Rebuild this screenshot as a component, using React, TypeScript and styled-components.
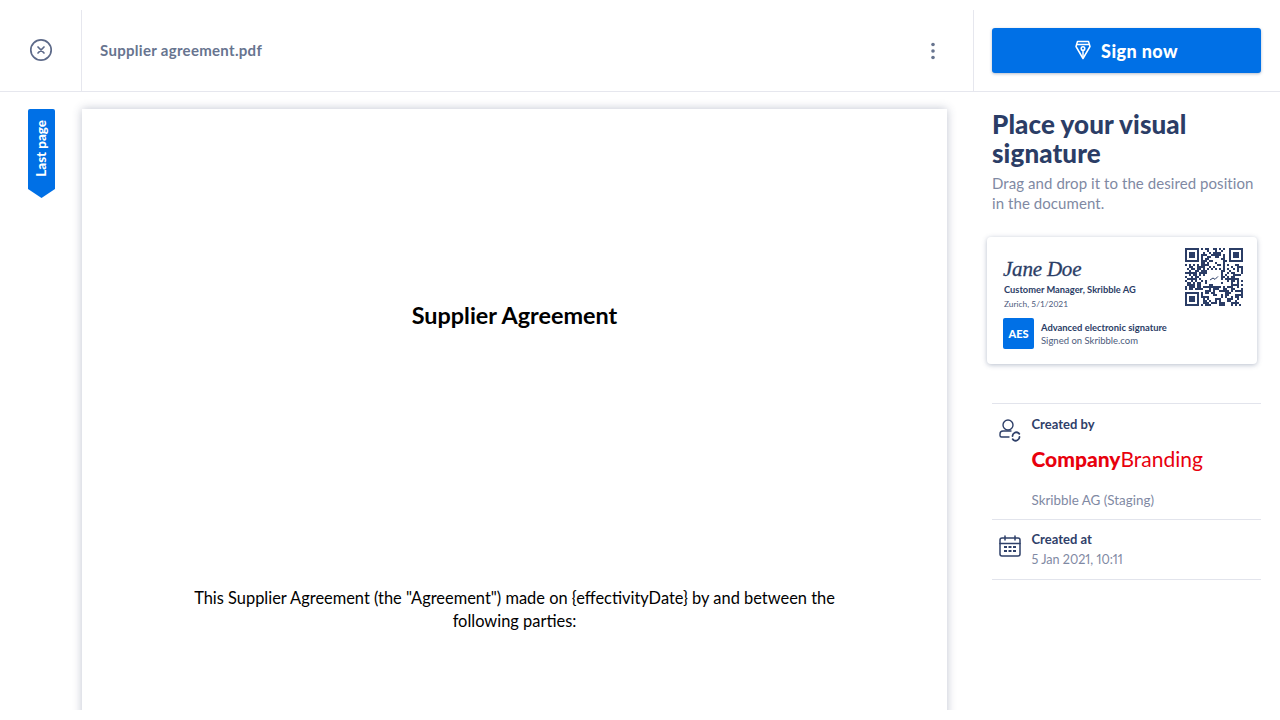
import React from "react";
import styled, { createGlobalStyle } from "styled-components";

const Global = createGlobalStyle`
  html, body { margin: 0; padding: 0; background: #fff; }
  body { width: 1280px; height: 720px; overflow: hidden; font-family: Lato, "Open Sans", sans-serif; }
`;
const Page = styled.div`width:1280px;height:720px;overflow:hidden;display:flex;flex-direction:column;background:#fff;`;
const Header = styled.header`height:91px;flex:none;display:flex;border-bottom:1px solid #e6e7ee;`;
const CloseCell = styled.div`width:81px;flex:none;margin-top:10px;border-right:1px solid #e6e7ee;display:flex;align-items:center;justify-content:center;padding-bottom:2px;`;
const TitleCell = styled.div`width:892px;flex:none;margin-top:10px;border-right:1px solid #e6e7ee;display:flex;align-items:center;justify-content:space-between;padding:0 32px 0 18px;box-sizing:border-box;`;
const FileName = styled.div`font-size:15px;font-weight:700;color:#67748f;letter-spacing:.3px;margin-bottom:2px;`;
const ButtonCell = styled.div`flex:1;padding:28px 19px 0 18px;`;
const SignButton = styled.button`width:269px;height:45px;border:0;border-radius:3px;background:#0070e6;box-shadow:0 1px 3px rgba(40,60,100,.35);color:#fff;font:900 18px Lato,sans-serif;letter-spacing:.4px;display:flex;align-items:center;justify-content:center;gap:10px;padding:0;`;
const NibIcon = styled.svg`margin-top:-2px;`;
const Body = styled.main`height:618px;flex:none;overflow:hidden;display:grid;grid-template-columns:82px 865px 1fr;`;
const Rail = styled.div`padding:17px 0 0 28px;`;
const Bookmark = styled.div`width:27px;height:89px;background:#0070e6;border-radius:2px 2px 0 0;clip-path:polygon(0 0,100% 0,100% 80px,50% 100%,0 80px);display:flex;justify-content:center;align-items:flex-start;padding-top:11px;box-sizing:border-box;`;
const BookmarkText = styled.span`writing-mode:vertical-rl;transform:rotate(180deg);color:#fff;font-size:13.4px;font-weight:900;line-height:27px;`;
const Sheet = styled.section`margin-top:17px;background:#fff;box-shadow:0 0 9px rgba(60,70,110,.32);display:flex;flex-direction:column;align-items:center;height:700px;`;
const DocTitle = styled.h1`margin:191px 0 0;font:700 23.4px/30px Lato,sans-serif;color:#000;`;
const DocText = styled.p`margin:256px 0 0;width:690px;text-align:center;font:400 16.42px/23px Lato,sans-serif;color:#000;`;
const Side = styled.aside`padding:18px 19px 0 45px;display:flex;flex-direction:column;`;
const Heading = styled.h2`margin:0;font:900 26px/29px Lato,sans-serif;letter-spacing:.1px;color:#2b3d66;`;
const Hint = styled.p`margin:6px 0 0;font:400 15px/19.5px Lato,sans-serif;color:#7f89a3;letter-spacing:.07px;`;
const SigCard = styled.div`margin:24px 0 0 -5px;width:270px;height:127px;box-sizing:border-box;border-radius:4px;background:#fff;box-shadow:0 1px 5px rgba(50,70,110,.35);padding:11px 14px 0 16px;position:relative;display:flex;flex-direction:column;`;
const SigName = styled.div`margin-top:9px;font:italic 400 21px/24px "Liberation Serif",serif;color:#2b3d66;letter-spacing:-.2px;-webkit-text-stroke:.3px #2b3d66;`;
const SigRole = styled.div`margin:3px 0 0 1px;font:700 9.3px/12px Lato,sans-serif;color:#2b3d66;`;
const SigPlace = styled.div`margin:2px 0 0 1px;font:400 8.4px/12px Lato,sans-serif;color:#4d5b7c;`;
const AesRow = styled.div`margin-top:8px;display:flex;gap:7px;align-items:center;`;
const AesBadge = styled.div`width:31px;height:31px;border-radius:2px;background:#0070e6;color:#fff;font:900 11px/31px Lato,sans-serif;text-align:center;`;
const AesTitle = styled.div`font:700 9.4px/13px Lato,sans-serif;color:#2b3d66;`;
const AesSub = styled.div`font:400 9.5px/13px Lato,sans-serif;color:#4d5b7c;`;
const Qr = styled.svg`position:absolute;left:198px;top:11px;`;
const InfoList = styled.div`margin-top:39px;border-top:1px solid #e2e4ec;`;
const InfoRow = styled.div<{ $h: number; $pt: number }>`height:${p => p.$h}px;box-sizing:border-box;border-bottom:1px solid #e2e4ec;display:grid;grid-template-columns:33.5px 1fr;padding:${p => p.$pt}px 0 0 6px;`;
const InfoIcon = styled.svg<{ $mt: number }>`margin-top:${p => p.$mt}px;`;
const InfoLabel = styled.div`font:700 13px/16px Lato,sans-serif;color:#2f4069;`;
const InfoValue = styled.div<{ $mt: number; $size: number }>`margin-top:${p => p.$mt}px;font:400 ${p => p.$size}px/16px Lato,sans-serif;font-variant-numeric:proportional-nums;color:#7f89a3;`;
const Brand = styled.div`margin-top:14px;font:400 21px/26px Lato,sans-serif;color:#e8000d;`;
const BrandStrong = styled.strong`font-weight:900;`;

function qrPath(): string {
  const n = 29;
  const inFinder = (x: number, y: number, a: number, b: number) => x >= a && x < a + 8 && y >= b && y < b + 8;
  let s = 12345, d = "";
  const box = (x: number, y: number, w: number, h: number) => { d += `M${x} ${y}h${w}v${h}h${-w}z`; };
  for (let y = 0; y < n; y++) for (let x = 0; x < n; x++) {
    s = (s * 1103515245 + 12345) & 0x7fffffff;
    const f = inFinder(x, y, 0, 0) || inFinder(x, y, n - 8, 0) || inFinder(x, y, 0, n - 8);
    const c = x >= 11 && x < 18 && y >= 11 && y < 18;
    if (!f && !c && ((s >> 16) & 1)) box(x, y, 1, 1);
  }
  for (const [a, b] of [[0, 0], [n - 7, 0], [0, n - 7]]) {
    d += `M${a} ${b}h7v7h-7zM${a + 1} ${b + 1}v5h5v-5z`;
    box(a + 2, b + 2, 3, 3);
  }
  return d;
}

const docText = 'This Supplier Agreement (the "Agreement") made on {effectivityDate} by and between the following parties:';

export default function App() {
  return (
    <Page>
      <Global />
      <Header>
        <CloseCell>
          <svg width="24" height="24" viewBox="0 0 24 24" fill="none" stroke="#5d6a89" strokeWidth="1.7" strokeLinecap="round">
            <circle cx="12" cy="12" r="10.2" /><path d="M9 9l6 6M15 9l-6 6" />
          </svg>
        </CloseCell>
        <TitleCell>
          <FileName>Supplier agreement.pdf</FileName>
          <svg width="16" height="20" viewBox="0 0 16 20" fill="#67748f">
            <circle cx="8" cy="3.5" r="1.8" /><circle cx="8" cy="10" r="1.8" /><circle cx="8" cy="16.5" r="1.8" />
          </svg>
        </TitleCell>
        <ButtonCell>
          <SignButton>
            <NibIcon width="16" height="20" viewBox="0 0 16 20" fill="none" stroke="#fff" strokeWidth="1.5" strokeLinejoin="round">
              <path d="M2.5 1.5h11l1.5 5-7 12-7-12z" /><path d="M2 4.5h12" /><circle cx="8" cy="8.5" r="1.8" /><path d="M8 10.3V17" />
            </NibIcon>
            Sign now
          </SignButton>
        </ButtonCell>
      </Header>
      <Body>
        <Rail><Bookmark><BookmarkText>Last page</BookmarkText></Bookmark></Rail>
        <Sheet>
          <DocTitle>Supplier Agreement</DocTitle>
          <DocText>{docText}</DocText>
        </Sheet>
        <Side>
          <Heading>Place your visual signature</Heading>
          <Hint>Drag and drop it to the desired position in the document.</Hint>
          <SigCard>
            <SigName>Jane Doe</SigName>
            <SigRole>Customer Manager, Skribble AG</SigRole>
            <SigPlace>Zurich, 5/1/2021</SigPlace>
            <AesRow>
              <AesBadge>AES</AesBadge>
              <div><AesTitle>Advanced electronic signature</AesTitle><AesSub>Signed on Skribble.com</AesSub></div>
            </AesRow>
            <Qr width="58" height="58" viewBox="0 0 29 29" fill="#2b3d66" fillRule="evenodd"><path d={qrPath()} /><path d="M12.5 16l1.5-1 1 .7 1.5-1.5" fill="none" stroke="#2b3d66" strokeWidth=".5" /></Qr>
          </SigCard>
          <InfoList>
            <InfoRow $h={116} $pt={12}>
              <InfoIcon $mt={2} width="24" height="24" viewBox="0 0 24 24" fill="none" stroke="#2f4069" strokeWidth="1.4" strokeLinecap="round">
                <circle cx="10" cy="7" r="5" /><path d="M13 13H5a3 3 0 0 0-3 3v1.5a1.5 1.5 0 0 0 1.5 1.5H11" /><path d="M14.5 18a3.8 3.8 0 0 1 6-3l.8.8M21.5 19a3.8 3.8 0 0 1-6 3l-.8-.8" strokeWidth="1.8" />
              </InfoIcon>
              <div>
                <InfoLabel>Created by</InfoLabel>
                <Brand><BrandStrong>Company</BrandStrong>Branding</Brand>
                <InfoValue $mt={20} $size={13.4}>Skribble AG (Staging)</InfoValue>
              </div>
            </InfoRow>
            <InfoRow $h={60} $pt={11}>
              <InfoIcon $mt={3} width="24" height="24" viewBox="0 0 24 24" fill="none" stroke="#2f4069" strokeWidth="1.5" strokeLinecap="round">
                <rect x="2" y="4" width="20" height="18" rx="2" /><path d="M2 9.5h20M7 2v4M17 2v4" />
                <path strokeWidth="2" strokeLinecap="butt" d="M6 13h3M10.5 13h3M15 13h3M6 17h3M10.5 17h3M15 17h3" />
              </InfoIcon>
              <div>
                <InfoLabel>Created at</InfoLabel>
                <InfoValue $mt={5} $size={12.6}>5 Jan 2021, 10:11</InfoValue>
              </div>
            </InfoRow>
          </InfoList>
        </Side>
      </Body>
    </Page>
  );
}
